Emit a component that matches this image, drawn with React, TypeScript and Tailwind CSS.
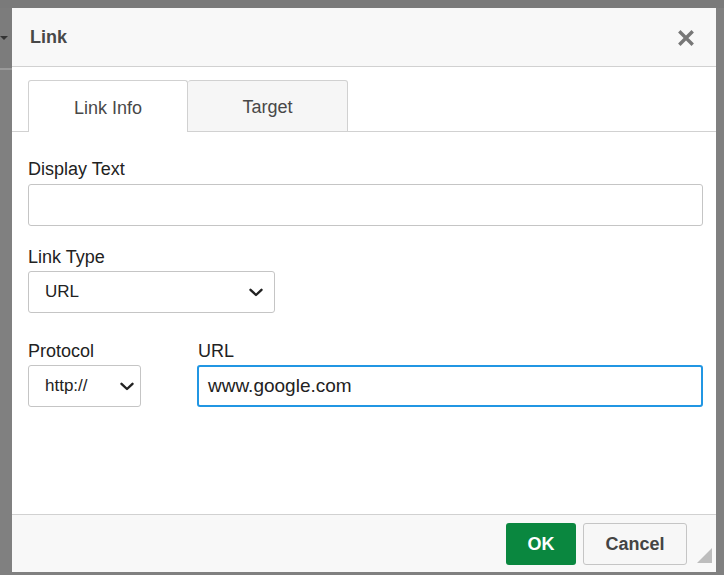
function Chevron() {
  return (
    <svg width="14" height="9" viewBox="0 0 14 9" fill="none">
      <path d="M1.5 1.8 7 7 12.5 1.8" stroke="#222" strokeWidth="2.4" strokeLinecap="round" strokeLinejoin="round" />
    </svg>
  );
}

export default function App() {
  return (
    <div className="relative h-[575px] w-[724px] overflow-hidden bg-[#808080] pl-[12px] pt-[8px] font-['Liberation_Sans',Arial,sans-serif]">
      {/* page behind the overlay */}
      <div className="absolute left-0 top-0 h-[8px] w-full bg-[#7a7a7a]" />
      <div className="absolute left-0 top-[8px] h-[60px] w-[12px] bg-[#7c7c7c]" />
      <div className="absolute left-0 top-[68px] h-[2px] w-[12px] bg-[#9a9a9a]" />
      <div className="absolute left-0 top-[36px] h-0 w-0 border-x-[4px] border-t-[4px] border-x-transparent border-t-[#333]" />

      <div className="relative flex h-[564px] w-[704px] flex-col bg-white">
        <div className="flex h-[59px] items-center justify-between border-b border-[#d1d1d1] bg-[#f8f8f8] pl-[18px] pr-[22px]">
          <span className="text-[18px] font-bold text-[#484848]">Link</span>
          <svg width="16" height="16" viewBox="0 0 16 16" className="mt-[2px]">
            <path d="M2.5 2.5 13.5 13.5M13.5 2.5 2.5 13.5" stroke="#777" strokeWidth="3.4" strokeLinecap="square" />
          </svg>
        </div>

        <div className="flex border-b border-[#d1d1d1] px-[16px] pt-[13px]">
          <div className="-mb-px flex h-[52px] w-[160px] items-center justify-center rounded-t-[3px] border border-b-0 border-[#d1d1d1] bg-white pt-[3px] text-[18px] text-[#484848]">
            Link Info
          </div>
          <div className="-mb-px flex h-[52px] w-[160px] items-center justify-center rounded-t-[3px] border border-l-0 border-[#d1d1d1] bg-[#f6f6f6] pt-[3px] text-[18px] text-[#484848]">
            Target
          </div>
        </div>

        <div className="flex flex-col pl-[16px] pr-[13px] pt-[27px] text-[#222]">
          <label className="mb-[5px] block text-[18px] leading-[20px]">Display Text</label>
          <div className="h-[42px] w-full rounded-[3px] border border-[#c5c5c5]" />

          <label className="mb-[4px] mt-[21px] block text-[18px] leading-[20px]">Link Type</label>
          <div className="flex h-[42px] w-[247px] items-center justify-between rounded-[3px] border border-[#c5c5c5] pl-[16px] pr-[11px] text-[17px]">
            <span>URL</span>
            <Chevron />
          </div>

          <div className="mt-[28px] flex gap-[56px]">
            <div className="w-[113px]">
              <label className="mb-[4px] block text-[18px] leading-[20px]">Protocol</label>
              <div className="flex h-[42px] items-center justify-between rounded-[3px] border border-[#c5c5c5] pl-[16px] pr-[6px] text-[17px]">
                <span>http://</span>
                <Chevron />
              </div>
            </div>
            <div className="flex-1">
              <label className="mb-[4px] block pl-px text-[18px] leading-[20px]">URL</label>
              <div className="flex h-[42px] items-center rounded-[3px] border-2 border-[#2196e3] px-[9px] text-[19px]">
                www.google.com
              </div>
            </div>
          </div>
        </div>

        <div className="relative mt-auto flex h-[58px] items-start justify-end gap-[7px] border-t border-[#d1d1d1] bg-[#f8f8f8] pr-[29px] pt-[8px]">
          <button className="h-[42px] w-[70px] rounded-[3px] bg-[#0a873f] text-[18px] font-bold text-white">OK</button>
          <button className="h-[42px] w-[104px] rounded-[3px] border border-[#c5c5c5] bg-[#f7f7f7] text-[18px] font-bold text-[#444]">
            Cancel
          </button>
          <svg width="15" height="15" viewBox="0 0 15 15" className="absolute bottom-[9px] right-[4px]">
            <path d="M15 0V15H0Z" fill="#bdbdbd" />
          </svg>
        </div>
      </div>
    </div>
  );
}
